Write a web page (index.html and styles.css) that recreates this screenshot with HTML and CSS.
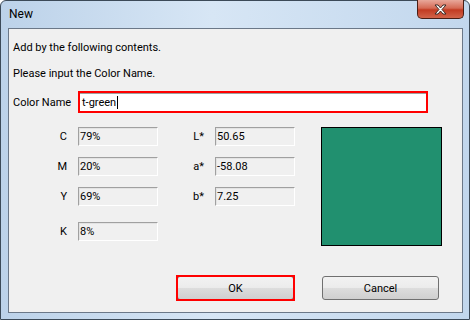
FILE: index.html
```html
<!DOCTYPE html>
<html lang="en">

<head>
    <meta charset="UTF-8">
    <title>New</title>
    <link rel="stylesheet" href="styles.css">
</head>

<body>

    <div class="window">
        <div class="titlebar">
            <span class="title">New</span>
            <button class="close" type="button">
                <svg width="17" height="11" viewBox="0 0 17 11">
                    <path d="M3 1h3l2.5 3 2.5-3h3l-4 4.5 4 4.5h-3l-2.5-3-2.5 3h-3l4-4.5z" fill="#fff" stroke="#3b2a26" stroke-width="1" stroke-linejoin="round"/>
                </svg>
            </button>
        </div>

        <div class="client">
            <p class="msg">Add by the following contents.</p>
            <p class="msg">Please input the Color Name.</p>

            <div class="name-row">
                <label for="colorName">Color Name</label>
                <div class="name-input" id="colorName">t-green<span class="caret"></span></div>
            </div>

            <div class="values">
                <div class="col">
                    <div class="field"><span class="lbl">C</span><span class="box">79%</span></div>
                    <div class="field"><span class="lbl">M</span><span class="box">20%</span></div>
                    <div class="field"><span class="lbl">Y</span><span class="box">69%</span></div>
                    <div class="field field-k"><span class="lbl">K</span><span class="box">8%</span></div>
                </div>
                <div class="col">
                    <div class="field"><span class="lbl">L*</span><span class="box">50.65</span></div>
                    <div class="field"><span class="lbl">a*</span><span class="box">-58.08</span></div>
                    <div class="field"><span class="lbl">b*</span><span class="box">7.25</span></div>
                </div>
                <div class="swatch"></div>
            </div>

            <div class="buttons">
                <button type="button" class="btn btn-ok">OK</button>
                <button type="button" class="btn">Cancel</button>
            </div>
        </div>
    </div>

</body>

</html>
```

FILE: styles.css
```css
body {
    margin: 0;
    padding: 0;
    font-family: 'Roboto', 'Liberation Sans', sans-serif;
    font-size: 11px;
    color: #000;
    background-color: #fff;
}

.window {
    width: 470px;
    height: 320px;
    box-sizing: border-box;
    border: 1px solid #3c4a58;
    border-radius: 6px 6px 0 0;
    background: linear-gradient(to right, #bcd2e9, #d7e6f5 45%, #c2d7ed);
    display: flex;
    flex-direction: column;
}

.titlebar {
    height: 27px;
    display: flex;
    justify-content: space-between;
    align-items: flex-start;
    padding-left: 8px;
}

.title {
    line-height: 27px;
    font-size: 12px;
}

.close {
    width: 47px;
    height: 19px;
    margin-right: 5px;
    margin-top: -1px;
    padding: 0;
    border: 1px solid #4a1e15;
    border-top: none;
    border-radius: 0 0 5px 5px;
    background: linear-gradient(#e8a89b, #d56a55 45%, #c23b22 55%, #d2644a);
    display: flex;
    align-items: center;
    justify-content: center;
}

.client {
    flex: 1;
    margin: 0 6px 6px 7px;
    border: 1px solid #6b7888;
    background-color: #f0f0f0;
    padding: 6px 0 0 4px;
}

.msg {
    margin: 0;
    line-height: 26px;
}

.name-row {
    display: flex;
    align-items: center;
    margin-top: 4px;
    height: 22px;
}

.name-row label {
    width: 65px;
}

.name-input {
    width: 350px;
    height: 22px;
    box-sizing: border-box;
    border: 2px solid #f00;
    box-shadow: inset 0 1px 0 #a0a0a0;
    background-color: #fff;
    padding: 0 2px;
    display: flex;
    align-items: center;
}

.caret {
    width: 1px;
    height: 13px;
    margin-left: 1px;
    background-color: #000;
}

.values {
    display: flex;
    margin-top: 14px;
}

.col {
    display: flex;
    flex-direction: column;
    gap: 11px;
}

.field {
    display: flex;
    align-items: center;
    height: 19px;
}

.field-k {
    margin-top: 5px;
}

.lbl {
    width: 54px;
    text-align: right;
    margin-right: 11px;
}

.col + .col .lbl {
    width: 46px;
}

.box {
    width: 80px;
    height: 19px;
    box-sizing: border-box;
    border: 1px solid;
    border-color: #a0a0a0 #fff #fff #a0a0a0;
    box-shadow: inset 1px 1px 0 #e3e3e3;
    line-height: 17px;
    padding-left: 1px;
}

.swatch {
    width: 121px;
    height: 119px;
    box-sizing: border-box;
    margin-left: 26px;
    border: 1px solid #000;
    background-color: #21906f;
}

.buttons {
    display: flex;
    margin-top: 30px;
    padding-left: 164px;
    gap: 28px;
}

.btn {
    position: relative;
    width: 117px;
    height: 24px;
    border: 1px solid #707070;
    border-radius: 3px;
    background: linear-gradient(#f2f2f2, #ebebeb 50%, #dddddd 50%, #cfcfcf);
    font: inherit;
    color: #000;
    padding: 0;
}

/* red marker box round the default button */
.btn-ok::after {
    content: '';
    position: absolute;
    top: -2px;
    left: -2px;
    right: -2px;
    bottom: -2px;
    border: 2px solid #f00;
}
```
